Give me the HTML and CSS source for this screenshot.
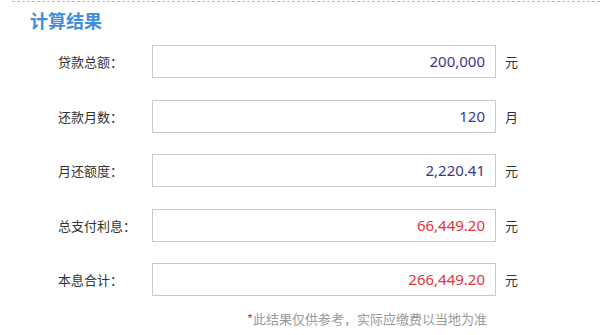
FILE: index.html
```html
<!DOCTYPE html>
<html>
<head>
    <meta charset="utf-8">
    <title>计算结果</title>
    <link rel="stylesheet" href="styles.css">
</head>
<body>
    <div class="result-panel">
        <h2 class="result-title">计算结果</h2>
        <div class="result-rows">
            <div class="result-row">
                <span class="row-label">贷款总额：</span>
                <div class="row-value">200,000</div>
                <span class="row-unit">元</span>
            </div>
            <div class="result-row">
                <span class="row-label">还款月数：</span>
                <div class="row-value">120</div>
                <span class="row-unit">月</span>
            </div>
            <div class="result-row">
                <span class="row-label">月还额度：</span>
                <div class="row-value">2,220.41</div>
                <span class="row-unit">元</span>
            </div>
            <div class="result-row">
                <span class="row-label">总支付利息：</span>
                <div class="row-value red">66,449.20</div>
                <span class="row-unit">元</span>
            </div>
            <div class="result-row">
                <span class="row-label">本息合计：</span>
                <div class="row-value red">266,449.20</div>
                <span class="row-unit">元</span>
            </div>
        </div>
        <p class="result-note"><span class="star">*</span>此结果仅供参考，实际应缴费以当地为准</p>
    </div>
</body>
</html>
```

FILE: styles.css
```css
body {
    margin: 0;
    font-family: "Noto Sans", "Noto Sans CJK SC", sans-serif;
    color: #333;
    background: #fff;
}

.result-panel {
    margin-left: 12px;
    border-top: 1px dashed #bbb;
    margin-top: 1px;
    height: 333px;
}

.result-title {
    margin: 0;
    padding: 6px 0 0 18px;
    font-size: 18px;
    line-height: 24px;
    font-weight: bold;
    color: #3f8ee0;
    font-family: "Noto Sans CJK SC", sans-serif;
}

.result-rows {
    padding: 13px 0 0 46px;
}

.result-row {
    display: flex;
    align-items: center;
    height: 33px;
    margin-bottom: 21.5px;
}

.row-label {
    width: 94px;
    font-size: 13px;
    font-family: "Noto Sans CJK SC", sans-serif;
    color: #333;
}

.row-value {
    box-sizing: border-box;
    width: 344px;
    height: 33px;
    border: 1px solid #cbcbcb;
    padding: 0 10px;
    text-align: right;
    font-size: 15px;
    line-height: 31px;
    color: #3a3a8c;
}

.row-value.red {
    color: #e8323c;
}

.row-unit {
    margin-left: 9px;
    font-size: 13px;
    font-family: "Noto Sans CJK SC", sans-serif;
}

.result-note {
    margin: -9px 0 0 235px;
    font-size: 13px;
    color: #999;
    font-family: "Noto Sans CJK SC", sans-serif;
}

.star {
    color: #e8323c;
}
```
